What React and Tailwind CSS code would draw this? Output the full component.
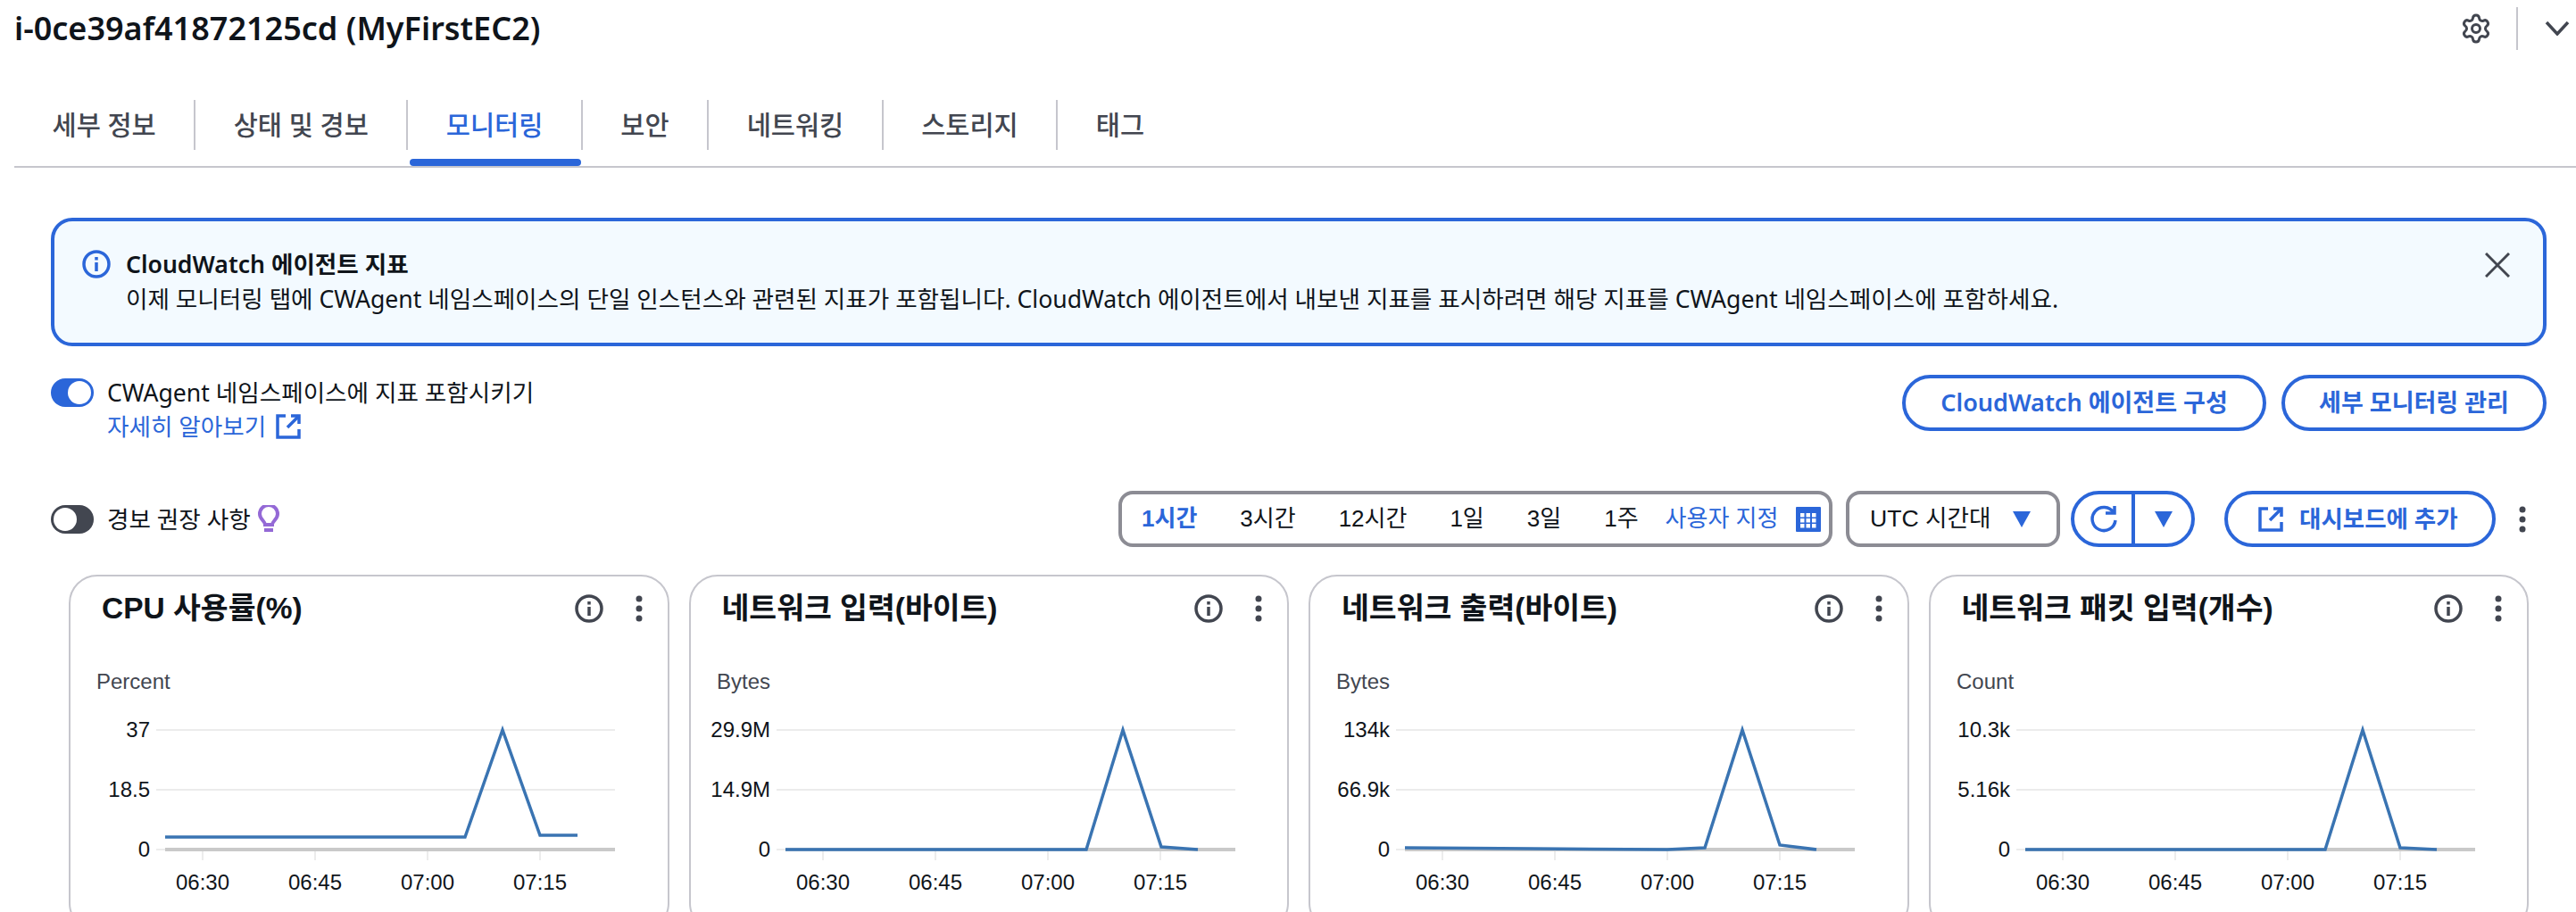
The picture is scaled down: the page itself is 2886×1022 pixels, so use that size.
import { Settings } from "lucide-react";

const BLUE = "#2b66d9";
const TABS = ["세부 정보", "상태 및 경보", "모니터링", "보안", "네트워킹", "스토리지", "태그"];
const RANGES = ["1시간", "3시간", "12시간", "1일", "3일", "1주"];

const CARDS = [
  {
    title: "CPU 사용률(%)",
    unit: "Percent",
    ticks: ["37", "18.5", "0"],
    points: "107,198 443,198 485,78 527,196 569,196",
  },
  {
    title: "네트워크 입력(바이트)",
    unit: "Bytes",
    ticks: ["29.9M", "14.9M", "0"],
    points: "107,212 444,212 485,78 528,209 569,212",
  },
  {
    title: "네트워크 출력(바이트)",
    unit: "Bytes",
    ticks: ["134k", "66.9k", "0"],
    points: "107,210 250,211 401,212 443,210 485,78 527,207 568,212",
  },
  {
    title: "네트워크 패킷 입력(개수)",
    unit: "Count",
    ticks: ["10.3k", "5.16k", "0"],
    points: "107,212 443,212 485,78 527,210 568,212",
  },
];

function InfoIcon({ color, className }) {
  return (
    <svg viewBox="0 0 32 32" className={className} fill="none" stroke={color} strokeWidth="3.5">
      <circle cx="16" cy="16" r="14" />
      <path d="M16 14v10" />
      <path d="M16 8v3.5" />
    </svg>
  );
}

function Dots() {
  return (
    <svg viewBox="0 0 8 32" className="w-2 h-8" fill="#424650">
      <circle cx="4" cy="5" r="3.5" />
      <circle cx="4" cy="16" r="3.5" />
      <circle cx="4" cy="27" r="3.5" />
    </svg>
  );
}

function External({ className }) {
  return (
    <svg viewBox="0 0 28 28" className={className} fill="none" stroke={BLUE} strokeWidth="3.5">
      <path d="M11 2H2v24h24v-9" />
      <path d="M17 2h9v9" />
      <path d="M26 2 13 15" />
    </svg>
  );
}

function Caret({ className }) {
  return (
    <svg viewBox="0 0 20 18" className={className} fill={BLUE}>
      <path d="M0 0h20L10 18z" />
    </svg>
  );
}

function Toggle({ on }) {
  return (
    <div
      className={`w-12 h-8 rounded-full flex items-center px-[3px] ${
        on ? "bg-[#2b66d9] justify-end" : "bg-[#424650] justify-start"
      }`}
    >
      <div className="w-[26px] h-[26px] rounded-full bg-white" />
    </div>
  );
}

function Chart({ card }) {
  return (
    <svg
      viewBox="0 0 672 270"
      className="block w-[672px] h-[270px] mt-[40px] -ml-[1px]"
      style={{ fontFamily: "'Liberation Sans', 'Noto Sans CJK KR', sans-serif" }}
    >
      <text x="30" y="32" fontSize="24" fill="#424650">
        {card.unit}
      </text>
      {[78, 145].map((y) => (
        <line key={y} x1="97" x2="611" y1={y} y2={y} stroke="#ececec" strokeWidth="2" />
      ))}
      <line x1="97" x2="107" y1="212" y2="212" stroke="#ececec" strokeWidth="2" />
      <line x1="107" x2="611" y1="212" y2="212" stroke="#c9c9c9" strokeWidth="4" />
      {card.ticks.map((t, i) => (
        <text key={t} x="90" y={86 + i * 67} fontSize="24" textAnchor="end" fill="#0f141a">
          {t}
        </text>
      ))}
      {[
        [149, "06:30"],
        [275, "06:45"],
        [401, "07:00"],
        [527, "07:15"],
      ].map(([x, label]) => (
        <g key={label}>
          <line x1={x} x2={x} y1="214" y2="224" stroke="#ececec" strokeWidth="2" />
          <text x={x} y="257" fontSize="24" textAnchor="middle" fill="#0f141a">
            {label}
          </text>
        </g>
      ))}
      <polyline points={card.points} fill="none" stroke="#3a74b2" strokeWidth="3.5" />
    </svg>
  );
}

function MetricCard({ card }) {
  return (
    <div className="h-[400px] rounded-[32px] border-2 border-[#c6c6cd] bg-white">
      <div className="flex items-center justify-between pl-[35px] pr-[28px] pt-[18px] h-[54px]">
        <div
          className="text-[33.5px] font-bold text-[#0f141a] leading-none whitespace-nowrap"
          style={{ fontFamily: "'Liberation Sans', 'Noto Sans CJK KR', sans-serif" }}
        >
          {card.title}
        </div>
        <div className="flex items-center gap-[36px]">
          <InfoIcon color="#424650" className="w-8 h-8" />
          <Dots />
        </div>
      </div>
      <Chart card={card} />
    </div>
  );
}

export default function App() {
  return (
    <div
      className="w-[2886px] h-[1022px] overflow-hidden bg-white text-[#0f141a]"
      style={{ fontFamily: "'Noto Sans', 'Noto Sans CJK KR', sans-serif" }}
    >
      {/* Title */}
      <div className="flex items-center justify-between pl-4 pr-[7px] h-[64px]">
        <h1 className="text-[36px] font-semibold leading-none -mt-[1px]">i-0ce39af41872125cd (MyFirstEC2)</h1>
        <div className="flex items-center">
          <Settings className="w-9 h-9 text-[#424650]" strokeWidth={2} />
          <div className="w-[2px] h-12 bg-[#c6c6cd] ml-[27px] mr-[30px]" />
          <svg viewBox="0 0 28 16" className="w-7 h-4" fill="none" stroke="#424650" strokeWidth="3.5">
            <path d="M2 1l12 13L26 1" />
          </svg>
        </div>
      </div>

      {/* Tabs */}
      <div className="mt-[48px] ml-4 flex border-b-2 border-[#c6c6cd] h-[76px]">
        {TABS.map((t, i) => (
          <div key={t} className="relative h-[74px]">
            <div
              className={`h-[56px] flex items-center px-[42.5px] text-[29.5px] font-medium whitespace-nowrap ${
                i === 2 ? "text-[#2b66d9]" : "text-[#424650]"
              } ${i < TABS.length - 1 ? "border-r-2 border-[#c6c6cd]" : ""}`}
            >
              {t}
            </div>
            {i === 2 && <div className="absolute left-[2px] right-[2px] bottom-0 h-2 rounded-[4px] bg-[#2b66d9]" />}
          </div>
        ))}
      </div>

      <div className="pl-[57px] pr-[33px]">
        {/* Flash */}
        <div className="mt-[56px] h-[144px] rounded-[24px] border-4 border-[#2b66d9] bg-[#f3faff] flex justify-between pl-[31px] pr-[37px] pt-[29px]">
          <div className="flex gap-[17px]">
            <InfoIcon color={BLUE} className="w-8 h-8 mt-[3px]" />
            <div>
              <div className="text-[26.6px] leading-[38px] font-semibold">CloudWatch 에이전트 지표</div>
              <div className="text-[26.6px] leading-[40px] whitespace-nowrap">
                이제 모니터링 탭에 CWAgent 네임스페이스의 단일 인스턴스와 관련된 지표가 포함됩니다. CloudWatch 에이전트에서 내보낸 지표를 표시하려면 해당 지표를 CWAgent 네임스페이스에 포함하세요.
              </div>
            </div>
          </div>
          <svg viewBox="0 0 28 28" className="w-7 h-7 mt-[6px]" fill="none" stroke="#424650" strokeWidth="3">
            <path d="M1 1l26 26M27 1 1 27" />
          </svg>
        </div>

        {/* Agent toggle + buttons */}
        <div className="mt-[32px] flex justify-between items-start h-[63px]">
          <div className="flex gap-[15px] pt-[4px]">
            <Toggle on />
            <div>
              <div className="text-[26.6px] leading-[32px] whitespace-nowrap">CWAgent 네임스페이스에 지표 포함시키기</div>
              <div className="flex items-center gap-[11px] text-[26.6px] leading-[38px] mt-[3px] text-[#2b66d9]">
                자세히 알아보기
                <External className="w-7 h-7" />
              </div>
            </div>
          </div>
          <div className="flex gap-[17px]">
            <button className="h-[63px] w-[408px] rounded-full border-4 border-[#2b66d9] text-[27px] font-semibold text-[#2b66d9] whitespace-nowrap">
              CloudWatch 에이전트 구성
            </button>
            <button className="h-[63px] w-[297px] rounded-full border-4 border-[#2b66d9] text-[27px] font-semibold text-[#2b66d9] whitespace-nowrap">
              세부 모니터링 관리
            </button>
          </div>
        </div>

        {/* Alarm toggle + time controls */}
        <div className="mt-[67px] flex justify-between items-center h-[63px] pr-[23px]">
          <div className="flex items-center gap-[15px]">
            <Toggle />
            <div className="text-[26.6px] leading-[32px]">경보 권장 사항</div>
            <svg viewBox="0 0 24 32" className="w-6 h-8 -ml-[7px]" fill="none" stroke="#9469d6" strokeWidth="4">
              <path d="M8 22c0-4-6-6-6-12a10 10 0 0 1 20 0c0 6-6 8-6 12z" />
              <path d="M7 28h10" />
            </svg>
          </div>
          <div className="flex items-center" style={{ fontFamily: "'Liberation Sans', 'Noto Sans CJK KR', sans-serif" }}>
            <div className="h-[63px] w-[800px] rounded-[16px] border-4 border-[#8c8c94] flex items-center pl-[22px] text-[26px]">
              <div className="flex gap-[48px]">
                {RANGES.map((r, i) => (
                  <span key={r} className={i === 0 ? "font-bold text-[#2b66d9]" : ""}>
                    {r}
                  </span>
                ))}
              </div>
              <div className="flex items-center ml-[30px] gap-[20px] text-[#2b66d9]">
                사용자 지정
                <svg viewBox="0 0 28 28" className="w-7 h-7">
                  <rect width="28" height="28" rx="1" fill={BLUE} />
                  {[7, 13, 19].map((y) =>
                    [5, 11.5, 18].map((x) => <rect key={`${x}-${y}`} x={x} y={y} width="4.5" height="4.5" fill="white" />)
                  )}
                </svg>
              </div>
            </div>
            <div className="ml-[15px] h-[63px] w-[240px] rounded-[16px] border-4 border-[#8c8c94] flex items-center justify-between pl-[23px] pr-[29px] text-[26.6px]">
              UTC 시간대
              <Caret className="w-5 h-[18px]" />
            </div>
            <div className="ml-[12px] h-[63px] w-[139px] rounded-full border-4 border-[#2b66d9] flex items-center">
              <div className="w-[68px] h-full flex items-center justify-center border-r-4 border-[#2b66d9]">
                <svg viewBox="0 0 32 32" className="w-8 h-8 ml-[2px]" fill="none" stroke={BLUE} strokeWidth="3.5">
                  <path d="M27 8.5A13 13 0 1 0 29 17" />
                  <path d="M18 9h10V1" />
                </svg>
              </div>
              <div className="flex-1 flex justify-center">
                <Caret className="w-5 h-[18px]" />
              </div>
            </div>
            <button
              className="ml-[33px] h-[63px] w-[304px] rounded-full border-4 border-[#2b66d9] flex items-center pl-[34px] gap-[18px] text-[26.5px] font-semibold text-[#2b66d9] whitespace-nowrap"
              style={{ fontFamily: "'Noto Sans', 'Noto Sans CJK KR', sans-serif" }}
            >
              <External className="w-7 h-7" />
              대시보드에 추가
            </button>
            <div className="ml-[26px] flex">
              <Dots />
            </div>
          </div>
        </div>

        {/* Metric cards */}
        <div className="mt-[31px] mx-[20px] grid grid-cols-4 gap-[22px]">
          {CARDS.map((c) => (
            <MetricCard key={c.title} card={c} />
          ))}
        </div>
      </div>
    </div>
  );
}
